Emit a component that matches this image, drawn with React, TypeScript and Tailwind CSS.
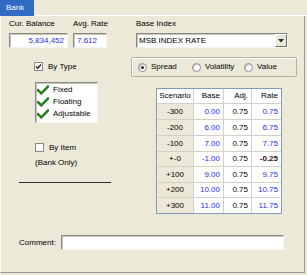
import React from "react";

const sunken =
  "bg-white border border-t-[#8A8A80] border-l-[#8A8A80] border-b-[#F4F4F0] border-r-[#F4F4F0] shadow-[inset_1px_1px_0_#C8C6BC]";

function Check({ className = "" }: { className?: string }) {
  return (
    <svg viewBox="0 0 12 10" className={className}>
      <path d="M1 5.2 L4.3 8.4 L11 1.5" fill="none" stroke="#1E7B1E" strokeWidth="2.4" strokeLinecap="square" />
    </svg>
  );
}

function Radio({ checked, label }: { checked?: boolean; label: string }) {
  return (
    <div className="flex items-center">
      <div className="w-[9px] h-[9px] rounded-full bg-white border border-[#8A8A80] shadow-[inset_1px_1px_0_#C8C6BC] flex items-center justify-center">
        {checked && <div className="w-[3px] h-[3px] rounded-full bg-[#202020]" />}
      </div>
      <span className="ml-[4px] leading-[10px] whitespace-nowrap">{label}</span>
    </div>
  );
}

const rows: { s: string; base: string; adj: string; rate: string; neg?: boolean }[] = [
  { s: "-300", base: "0.00", adj: "0.75", rate: "0.75" },
  { s: "-200", base: "6.00", adj: "0.75", rate: "6.75" },
  { s: "-100", base: "7.00", adj: "0.75", rate: "7.75" },
  { s: "+-0", base: "-1.00", adj: "0.75", rate: "-0.25", neg: true },
  { s: "+100", base: "9.00", adj: "0.75", rate: "9.75" },
  { s: "+200", base: "10.00", adj: "0.75", rate: "10.75" },
  { s: "+300", base: "11.00", adj: "0.75", rate: "11.75" },
];
const rowH = ["h-[16px]", "h-[16px]", "h-[16px]", "h-[15px]", "h-[16px]", "h-[15px]", "h-[15px]"];

export default function App() {
  return (
    <div className="w-[307px] h-[275px] bg-[#ECE9D8] text-[8px] text-black font-['Liberation_Sans',Arial,sans-serif] flex flex-col whitespace-nowrap">
      {/* tab strip */}
      <div className="h-[16px] flex">
        <div className="w-[34px] h-[16px] bg-[#316AC5] text-white pl-[6px] pt-[3px] leading-[10px]">Bank</div>
        <div className="flex-1 border-b border-white" />
      </div>
      {/* panel */}
      <div className="w-[305px] h-[257px] border-l border-l-white border-r border-b border-r-[#919B9C] border-b-[#919B9C]">
        {/* top row */}
        <div className="flex pl-[8px] pt-[3px]">
          <div className="flex flex-col w-[59px]">
            <span className="leading-[10px] h-[10px]">Cur. Balance</span>
            <div className={`mt-[4px] h-[15px] ${sunken} flex items-center justify-end pr-[3px] text-[#2B2BF0]`}>5,834,452</div>
          </div>
          <div className="flex flex-col w-[34px] ml-[5px]">
            <span className="leading-[10px] h-[10px]">Avg. Rate</span>
            <div className={`mt-[4px] h-[15px] ${sunken} flex items-center pl-[3px] text-[#2B2BF0]`}>7.612</div>
          </div>
          <div className="flex flex-col w-[152px] ml-[29px]">
            <span className="leading-[10px] h-[10px]">Base Index</span>
            <div className={`mt-[4px] h-[15px] ${sunken} flex items-center pl-[2px]`}>
              <span className="flex-1">MSB INDEX RATE</span>
              <div className="w-[12px] h-[13px] bg-[#ECE9D8] border border-t-white border-l-white border-b-[#6F6F6F] border-r-[#6F6F6F] flex items-center justify-center">
                <svg width="6" height="4" viewBox="0 0 6 4">
                  <path d="M0 0 H6 L3 3.5 Z" fill="#1E3A1E" />
                </svg>
              </div>
            </div>
          </div>
        </div>

        {/* middle */}
        <div className="flex">
          {/* left column */}
          <div className="w-[130px] flex flex-col">
            <div className="flex items-center ml-[33px] mt-[14px] h-[9px]">
              <div className="w-[9px] h-[9px] bg-white border border-[#8A8A80] flex items-center justify-center">
                <svg width="7" height="7" viewBox="0 0 7 7">
                  <path d="M1 3.5 L2.8 5.3 L6 1.5" fill="none" stroke="#222" strokeWidth="1.4" />
                </svg>
              </div>
              <span className="ml-[5px] leading-[10px]">By Type</span>
            </div>
            <div className={`ml-[34px] mt-[11px] w-[63px] h-[41px] ${sunken} flex flex-col pt-[1px]`}>
              {["Fixed", "Floating", "Adjustable"].map((t) => (
                <div key={t} className="h-[12px] flex items-center">
                  <Check className="w-[12px] h-[10px] ml-[1px]" />
                  <span className="ml-[4px] leading-[10px]">{t}</span>
                </div>
              ))}
            </div>
            <div className="flex items-center ml-[34px] mt-[20px] h-[9px]">
              <div className="w-[9px] h-[9px] bg-white border border-[#8A8A80]" />
              <span className="ml-[5px] leading-[10px]">By Item</span>
            </div>
            <div className="ml-[34px] mt-[6px] leading-[10px]">(Bank Only)</div>
            <div className="ml-[18px] mt-[14px] w-[92px] h-[1px] bg-[#303030]" />
          </div>

          {/* right column */}
          <div className="flex flex-col">
            <div className="mt-[9px] w-[166px] h-[20px] rounded-[2px] border border-[#B6B3A6] shadow-[inset_1px_1px_0_white] flex items-center pl-[6px]">
              <div className="w-[54px]"><Radio checked label="Spread" /></div>
              <div className="w-[52px]"><Radio label="Volatility" /></div>
              <Radio label="Value" />
            </div>
            <div className="ml-[25px] mt-[11px] w-[126px] border border-[#7F9DB9] grid grid-cols-[37px_30px_28px_29px]">
              <div className="h-[15px] flex items-center justify-center border-r border-b border-[#D4D0C8] bg-white">Scenario</div>
              <div className="h-[15px] flex items-center justify-end pr-[3px] border-r border-b border-[#D4D0C8] bg-white">Base</div>
              <div className="h-[15px] flex items-center justify-end pr-[3px] border-r border-b border-[#D4D0C8] bg-white">Adj.</div>
              <div className="h-[15px] flex items-center justify-end pr-[3px] border-b border-[#D4D0C8] bg-white">Rate</div>
              {rows.map((r, i) => {
                const last = i === rows.length - 1;
                const bb = last ? "" : "border-b";
                return (
                  <React.Fragment key={r.s}>
                    <div className={`${rowH[i]} flex items-center justify-center bg-[#ECE9D8] border-r ${bb} border-[#D4D0C8]`}>{r.s}</div>
                    <div className={`${rowH[i]} flex items-center justify-end pr-[3px] bg-white border-r ${bb} border-[#D4D0C8] text-[#2B2BF0]`}>{r.base}</div>
                    <div className={`${rowH[i]} flex items-center justify-end pr-[3px] bg-white border-r ${bb} border-[#D4D0C8]`}>{r.adj}</div>
                    <div className={`${rowH[i]} flex items-center justify-end pr-[3px] bg-white ${bb} border-[#D4D0C8] ${r.neg ? "text-[#301010] font-bold" : "text-[#2B2BF0]"}`}>{r.rate}</div>
                  </React.Fragment>
                );
              })}
            </div>
          </div>
        </div>

        {/* comment */}
        <div className="flex items-center ml-[18px] mt-[21px]">
          <span className="w-[42px] leading-[10px]">Comment:</span>
          <div className={`w-[223px] h-[15px] ${sunken}`} />
        </div>
      </div>
    </div>
  );
}
